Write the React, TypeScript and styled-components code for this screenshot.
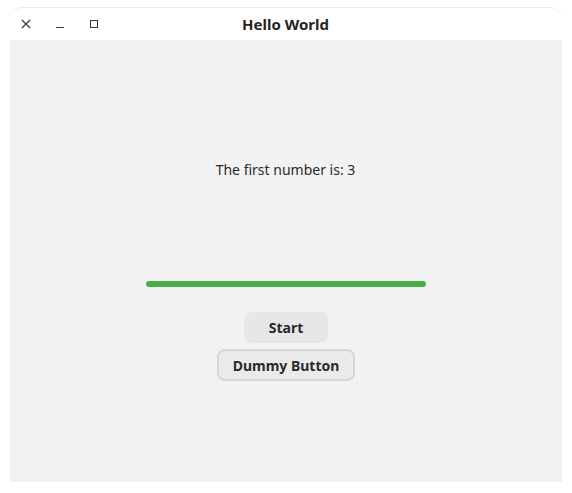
import React from "react";
import styled, { createGlobalStyle } from "styled-components";

const Global = createGlobalStyle`
  html, body { margin: 0; padding: 0; background: #ffffff; }
  body { font-family: "Noto Sans", "DejaVu Sans", sans-serif; color: #2e2e2e; }
`;

const Page = styled.div`
  width: 572px;
  height: 493px;
  padding: 8px 10px 0 10px;
  box-sizing: border-box;
`;

const Window = styled.div`
  width: 552px;
  display: flex;
  flex-direction: column;
  border-radius: 12px 12px 0 0;
  box-shadow: 0 -1px 0 0 #ececec;
  overflow: hidden;
`;

const TitleBar = styled.div`
  height: 32px;
  background: #ffffff;
  display: grid;
  grid-template-columns: 1fr auto 1fr;
  align-items: center;
`;

const Controls = styled.div`
  display: flex;
  align-items: center;
  gap: 18px;
  padding-left: 8px;
`;

const Control = styled.span`
  width: 16px;
  height: 16px;
  display: flex;
  align-items: center;
  justify-content: center;
  color: #3a3a3a;
`;

const Title = styled.div`
  font-weight: 700;
  font-size: 15px;
  color: #242424;
  margin-right: 1px;
`;

const Content = styled.div`
  height: 442px;
  background: #f2f2f2;
  display: flex;
  flex-direction: column;
  align-items: center;
  padding-top: 120px;
  box-sizing: border-box;
`;

const Label = styled.div`
  font-size: 14px;
  line-height: 20px;
  height: 20px;
  color: #2a2a2a;
  margin-right: 1px;
`;

const Bar = styled.div`
  width: 280px;
  height: 6px;
  border-radius: 3px;
  background: #48ae4c;
  margin-top: 101px;
`;

const Button = styled.button<{ $bordered?: boolean; $gap: number }>`
  font-family: "Noto Sans", "DejaVu Sans", sans-serif;
  font-weight: 700;
  font-size: 14px;
  color: #2a2a2a;
  margin-top: ${(p) => p.$gap}px;
  background: ${(p) => (p.$bordered ? "#eaeaea" : "#e7e7e7")};
  border: ${(p) => (p.$bordered ? "2px solid #d6d6d6" : "none")};
  border-radius: 8px;
  height: ${(p) => (p.$bordered ? 32 : 31)}px;
  padding: 0 ${(p) => (p.$bordered ? 14 : 25)}px;
  box-sizing: border-box;
  display: flex;
  align-items: center;
  justify-content: center;
`;

export default function App() {
  return (
    <>
      <Global />
      <Page>
        <Window>
          <TitleBar>
            <Controls>
              <Control>
                <svg width="10" height="10" viewBox="0 0 10 10">
                  <path d="M1 1 L9 9 M9 1 L1 9" stroke="currentColor" strokeWidth="1.2" />
                </svg>
              </Control>
              <Control>
                <svg width="10" height="10" viewBox="0 0 10 10">
                  <path d="M1 8.5 L9 8.5" stroke="currentColor" strokeWidth="1.1" />
                </svg>
              </Control>
              <Control>
                <svg width="10" height="10" viewBox="0 0 10 10">
                  <rect x="1.5" y="1.5" width="7" height="7" fill="none" stroke="currentColor" strokeWidth="1" />
                </svg>
              </Control>
            </Controls>
            <Title>Hello World</Title>
            <div />
          </TitleBar>
          <Content>
            <Label>The first number is: 3</Label>
            <Bar />
            <Button $gap={25}>Start</Button>
            <Button $gap={6} $bordered>
              Dummy Button
            </Button>
          </Content>
        </Window>
      </Page>
    </>
  );
}
